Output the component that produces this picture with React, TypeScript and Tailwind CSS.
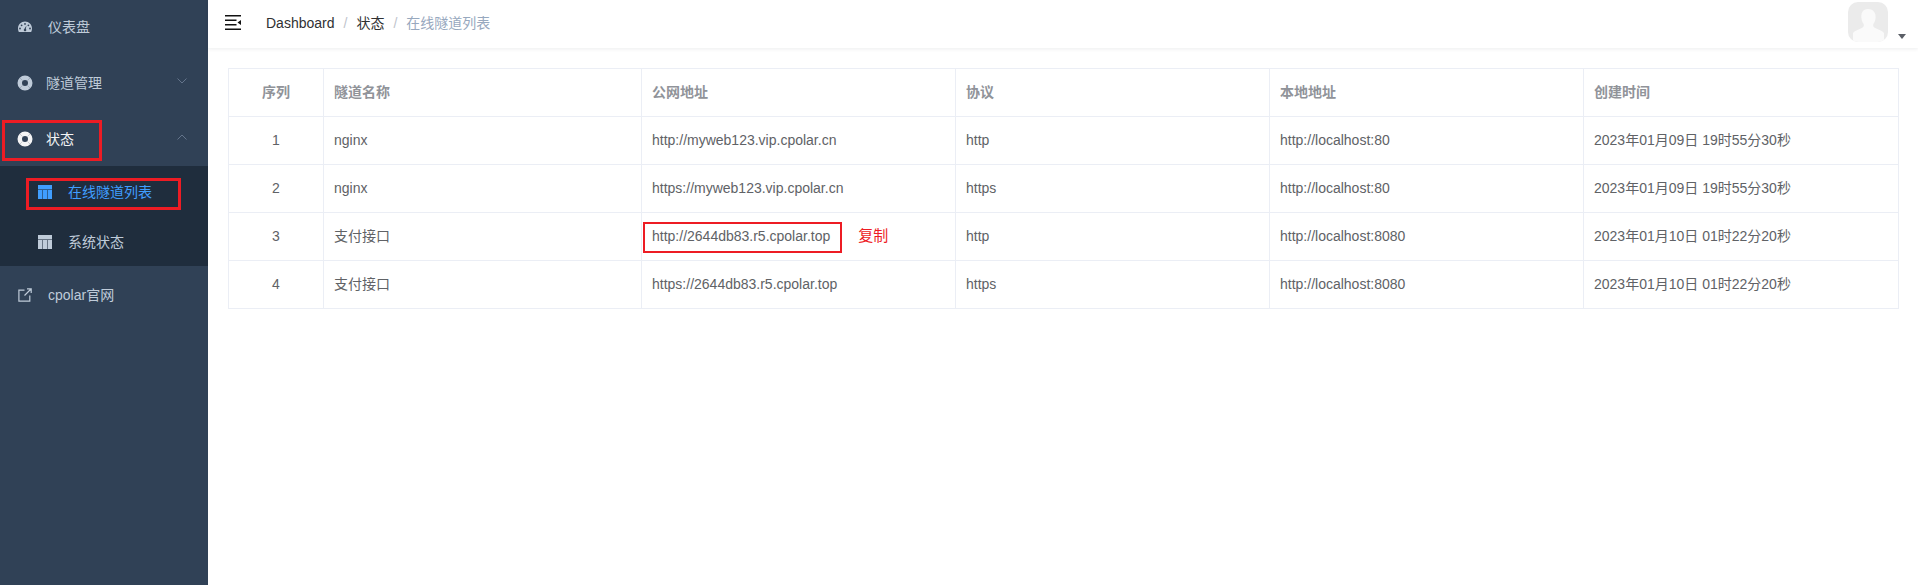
const font = { fontFamily: '"Liberation Sans","Noto Sans CJK SC",sans-serif' };

function Gauge() {
  return (
    <svg width="14" height="12" viewBox="0 0 14 12" className="shrink-0">
      <path fill="#bfcbd9" fillRule="evenodd" d="M7 0.5C3.1 0.5 0 3.6 0 7.5c0 1.200.3 2.400.8 3.400h12.400c.5-1 .8-2.200.8-3.400C14 3.600 10.900.5 7 .5zM7 2a.9.9 0 110 1.800A.9.9 0 017 2zM3.600 3.400a.9.9 0 110 1.800.9.9 0 010-1.800zM10.400 3.400a.9.9 0 110 1.800.9.9 0 010-1.800zM2 6.600a.9.9 0 110 1.800.9.9 0 010-1.800zM12 6.600a.9.9 0 110 1.800.9.9 0 010-1.800zM8.500 4.600l-.7 3.300a1.300 1.300 0 11-1.500 0z" />
    </svg>
  );
}

function Buoy({ color }: { color: string }) {
  return (
    <svg width="16" height="16" viewBox="0 0 16 16" className="shrink-0">
      <circle cx="8" cy="8" r="5.250" fill="none" stroke={color} strokeWidth="4.500" />
      <path d="M2.700 2.700l2.900 2.900M13.300 2.700l-2.900 2.900M2.700 13.300l2.900-2.900M13.300 13.300l-2.900-2.900" stroke="#304156" strokeWidth="0.7" opacity="0.3" />
    </svg>
  );
}

function Grid({ color, line }: { color: string; line: string }) {
  return (
    <svg width="14" height="14" viewBox="0 0 14 14" className="shrink-0">
      <rect width="14" height="14" fill={color} />
      <path d="M0 4.500h14M4.500 4.500V14M9.500 4.500V14" stroke={line} strokeWidth="1" opacity="0.55" />
    </svg>
  );
}

function Ext() {
  return (
    <svg width="14" height="14" viewBox="0 0 14 14" fill="none" stroke="#bfcbd9" strokeWidth="1.200" className="shrink-0">
      <path d="M6.500 2.200H.9v10.900h10.900V7.500M6.500 7.500L13 1M9 .9h4.200v4.200" />
    </svg>
  );
}

function Chevron({ up }: { up?: boolean }) {
  return (
    <svg width="10" height="6" viewBox="0 0 10 6" fill="none" stroke="#64748b" strokeWidth="1" className="ml-auto mr-[21px] mb-[3px] shrink-0">
      <path d={up ? "M.5 5.500L5 1l4.500 4.500" : "M.5.5L5 5 9.500.5"} />
    </svg>
  );
}

const rows = [
  ["1", "nginx", "http://myweb123.vip.cpolar.cn", "http", "http://localhost:80", "2023年01月09日 19时55分30秒"],
  ["2", "nginx", "https://myweb123.vip.cpolar.cn", "https", "http://localhost:80", "2023年01月09日 19时55分30秒"],
  ["3", "支付接口", "http://2644db83.r5.cpolar.top", "http", "http://localhost:8080", "2023年01月10日 01时22分20秒"],
  ["4", "支付接口", "https://2644db83.r5.cpolar.top", "https", "http://localhost:8080", "2023年01月10日 01时22分20秒"],
];
const heads = ["序列", "隧道名称", "公网地址", "协议", "本地地址", "创建时间"];
const widths = ["w-[95px]", "w-[318px]", "w-[314px]", "w-[314px]", "w-[314px]", "w-[315px]"];

export default function App() {
  return (
    <div style={font} className="flex h-[585px] w-[1918px] overflow-hidden bg-white text-sm">
      <aside className="w-[208px] shrink-0 bg-[#304156] text-[#bfcbd9]">
        <div className="flex h-[54px] items-center pl-[18px]">
          <Gauge />
          <span className="ml-[16px]">仪表盘</span>
        </div>
        <div className="flex h-[56px] items-center pl-[17px] pt-[1px]">
          <Buoy color="#bfcbd9" />
          <span className="ml-[13px]">隧道管理</span>
          <Chevron />
        </div>
        <div className="relative flex h-[56px] items-center pl-[17px] pt-[1px] text-[#f4f4f5]">
          <Buoy color="#f4f4f5" />
          <span className="ml-[13px]">状态</span>
          <Chevron up />
          <div className="absolute left-[2px] top-[10px] h-[41px] w-[100px] border-[3px] border-[#ed1c24]" />
        </div>
        <div className="bg-[#1f2d3d]">
          <div className="relative flex h-[50px] items-center pl-[38px] pt-[1px] text-[#409eff]">
            <Grid color="#409eff" line="#1f2d3d" />
            <span className="ml-[16px]">在线隧道列表</span>
            <div className="absolute left-[26px] top-[12px] h-[32px] w-[155px] border-[3px] border-[#ed1c24]" />
          </div>
          <div className="flex h-[50px] items-center pl-[38px] pt-[1px]">
            <Grid color="#bfcbd9" line="#1f2d3d" />
            <span className="ml-[16px]">系统状态</span>
          </div>
        </div>
        <div className="flex h-[56px] items-center pl-[18px] pt-[1px]">
          <Ext />
          <span className="ml-[16px]">cpolar官网</span>
        </div>
      </aside>
      <main className="flex-1">
        <header className="relative flex h-[48px] items-center shadow-[0_1px_4px_rgba(0,21,41,0.08)]">
          <svg width="16" height="15" viewBox="0 0 16 15" className="mb-[3px] ml-[17px]">
            <path fill="#111" d="M0 0h16v1.500H0zM0 4.500h11.500V6H0zM0 9h11.500v1.500H0zM0 13.500h16V15H0zM16 5v5l-3.500-2.500z" />
          </svg>
          <nav className="mb-[3px] ml-[25px] flex items-center">
            <span className="text-[#303133]">Dashboard</span>
            <span className="mx-[9px] text-[#c0c4cc]">/</span>
            <span className="text-[#303133]">状态</span>
            <span className="mx-[9px] text-[#c0c4cc]">/</span>
            <span className="text-[#97a8be]">在线隧道列表</span>
          </nav>
          <div className="ml-auto mr-[12px] flex items-end">
            <div className="relative mb-[5px] h-[40px] w-[40px] overflow-hidden rounded-[10px] bg-[#ebebeb]">
              <svg width="40" height="40" viewBox="0 0 40 40">
                <path fill="#fafafa" d="M20 7c5.500 0 8 4 7.600 9-.2 2.400-1 4.400-2.300 6-.6 2 .4 3.600 3 4.600 3 1.200 6 2.400 7.700 4.400V40H5v-9c1.700-2 4.700-3.200 7.700-4.400 2.600-1 3.600-2.600 3-4.600-1.300-1.600-2.100-3.600-2.300-6C13 11 14.500 7 20 7z" />
              </svg>
            </div>
            <svg width="8" height="5" viewBox="0 0 8 5" className="mb-[8px] ml-[10px]">
              <path fill="#5a5e66" d="M0 0h8L4 5z" />
            </svg>
          </div>
        </header>
        <div className="relative pl-[20px] pr-[19px] pt-[20px]">
          <table className="w-[1671px] table-fixed border-collapse text-[#606266]">
            <thead>
              <tr className="h-[48px]">
                {heads.map((h, i) => (
                  <th key={h} className={`${widths[i]} border border-[#ebeef5] px-[10px] pb-[2px] font-bold text-[#909399] ${i === 0 ? "text-center" : "text-left"}`}>
                    {h}
                  </th>
                ))}
              </tr>
            </thead>
            <tbody>
              {rows.map((r) => (
                <tr key={r[0]} className="h-[48px]">
                  {r.map((c, i) => (
                    <td key={i} className={`border border-[#ebeef5] px-[10px] pb-[2px] ${i === 0 ? "text-center" : "text-left"}`}>
                      {r[0] === "3" && i === 2 ? (
                        <div className="relative flex h-[20px] items-center">
                          <span>{c}</span>
                          <span className="ml-[28px] text-[15px] leading-[20px] text-[#ed1c24]">复制</span>
                          <div className="absolute left-[-9px] top-[-4px] h-[31px] w-[199px] border-[2px] border-[#ed1c24]" />
                        </div>
                      ) : (
                        c
                      )}
                    </td>
                  ))}
                </tr>
              ))}
            </tbody>
          </table>
        </div>
      </main>
    </div>
  );
}
